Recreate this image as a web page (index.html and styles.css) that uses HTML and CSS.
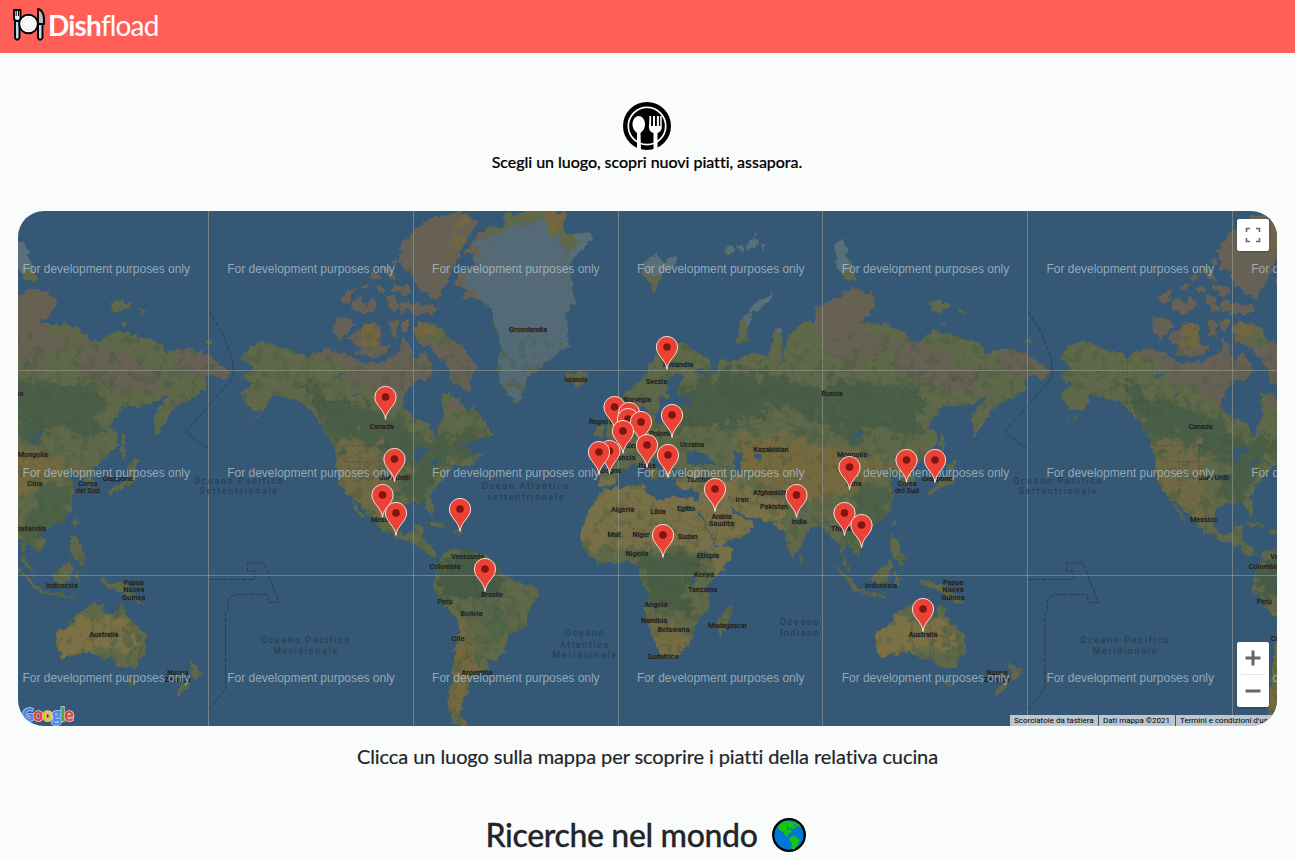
FILE: index.html
```html
<!DOCTYPE html>
<html lang="it">
<head>
<meta charset="utf-8">
<title>Dishfload</title>
<link rel="stylesheet" href="styles.css">
</head>
<body>
<header class="navbar">
  <svg class="brand-icon" viewBox="0 0 32 34" aria-hidden="true">
    <g stroke="#000" stroke-width="1.9" stroke-linejoin="round">
      <path d="M2 12V30Q4 33.500 6.500 30V12z" fill="#b9d9ef"/>
      <path d="M1 2V10Q1 13 4.300 13T7.500 10V2z" fill="#eee"/>
      <path d="M3.200 2v6M5.500 2v6" stroke-width="1"/>
      <path d="M25 14V30Q27 33.500 29.500 30V14z" fill="#b9d9ef"/>
      <path d="M25 1Q30.500 2 31 11V16H25z" fill="#bbb"/>
      <circle cx="15.500" cy="16" r="9.300" fill="#fff"/>
    </g>
    <circle cx="15.500" cy="16" r="6.200" fill="#f8f8f8" stroke="#ddd" stroke-width=".7"/>
  </svg>
  <span class="brand"><b>Dish</b>fload</span>
</header>
<main class="content">
  <section class="intro">
    <svg class="plate" viewBox="0 0 48 48" aria-hidden="true">
      <circle cx="24" cy="24" r="24" fill="#000"/>
      <circle cx="24" cy="24" r="18.700" fill="none" stroke="#fff" stroke-width="1.700"/>
      <path d="M14 48V31Q9 27 9.500 21Q11 14 15.700 14Q20.500 14 22 21Q22.500 27 17.500 31L18 48z" fill="#fff"/>
      <path d="M26.500 14h1.600v10h1.900V14h2v10h1.900V14h2v10h1.300V14h1.500V26Q38 30 34.500 31V47H30.500V31Q26 30 26 25z" fill="#fff"/>
    </svg>
    <p class="tagline">Scegli un luogo, scopri nuovi piatti, assapora.</p>
  </section>
  <section class="map">
    <svg class="map-canvas" viewBox="18 211 1259 515">
      <defs>
        <filter id="coast" x="0" y="0" width="100%" height="100%" color-interpolation-filters="sRGB">
          <feTurbulence type="fractalNoise" baseFrequency=".16" numOctaves="3" seed="4" result="n"/>
          <feDisplacementMap in="SourceGraphic" in2="n" scale="8" xChannelSelector="R" yChannelSelector="G"/>
        </filter>
        <filter id="patch" x="-20%" y="-20%" width="140%" height="140%" color-interpolation-filters="sRGB">
          <feTurbulence type="fractalNoise" baseFrequency=".08" numOctaves="4" seed="9" result="n"/>
          <feGaussianBlur in="SourceGraphic" stdDeviation="1.200" result="b"/>
          <feDisplacementMap in="b" in2="n" scale="34" xChannelSelector="R" yChannelSelector="G"/>
        </filter>
        <filter id="speckle" x="0" y="0" width="100%" height="100%" color-interpolation-filters="sRGB">
          <feTurbulence type="fractalNoise" baseFrequency=".11" numOctaves="4" seed="21"/>
          <feColorMatrix values="0 0 0 0 .25  0 0 0 0 .35  0 0 0 0 .25  9 0 0 0 -5"/>
        </filter>
        <clipPath id="land"><path id="shore" d="M240 358L248 347 263 341 281 347 308 357 326 348 345 353 361 363 385 362 395 355 401 352 403 338 410 345 413 358 424 362 431 372 419 378 408 388 404 395 402 408 414 418 429 423 434 437 438 435 438 425 444 415 441 393 453 393 463 405 468 415 472 405 482 418 492 432 488 438 477 440 465 443 456 450 470 447 472 455 484 453 470 465 453 467 447 472 445 477 437 485 430 497 435 508 433 517 428 508 423 502 410 503 397 508 394 525 402 535 412 533 416 525 424 526 422 535 426 543 434 547 437 555 431 557 419 547 411 543 397 537 387 533 379 528 377 522 367 513 357 500 353 500 360 510 367 520 360 516 351 500 339 482 336 467 335 450 329 438 321 425 312 412 301 402 284 397 271 395 268 405 258 418 245 425 263 412 251 410 243 400 241 393 255 383 240 378 248 372 253 368z
          M335 317L348 318 355 325 340 340 333 332zM351 335L365 325 375 322 380 328 381 345 391 348 378 357 355 355 361 348 348 338zM339 300L347 290 354 288 350 300 343 303zM351 300L361 299 367 306 373 296 377 309 363 314 353 308zM362 283h7v5h-7zM390 320L398 322 397 338 391 335zM401 320L410 320 407 332 401 332zM380 265l10 3 8 12-8-2zM386 295l10 2 4 12-8 3zM400 303l9-4 3 10-10 4zM393 284l12 3v5l-12-2zM370 276l7-3 3 5-7 3zM392 262l4-5 3 6-5 3zM398 289l8-4 6 6-8 5zM376 288l6-2 3 5-6 2z
          M399 250L406 240 413 232 430 218 460 212 478 222 467 238 460 255 447 282 437 300 427 294 417 285 410 272 401 268zM410 304L433 305 436 311 430 314 411 314zM412 330L420 322 430 322 443 328 447 338 460 345 477 368 470 375 470 392 453 382 447 365 430 348 417 342zM418 358L424 352 430 362 433 373 425 382 418 376z
          M478 235L490 227 502 228 505 213 520 213 537 210 567 213 563 228 570 235 590 232 592 238 577 255 570 265 573 285 575 302 566 312 568 325 568 345 555 355 543 365 527 378 520 402 510 398 498 378 497 358 502 350 497 332 490 308 477 298 460 298 466 290 455 283 460 272 472 270 475 257 465 252zM567 372L575 374 587 372 588 380 577 387 567 380z
          M438 568L443 552 457 548 487 555 505 575 517 582 537 588 538 595 528 612 527 625 510 633 507 645 497 660 487 660 488 668 470 678 468 695 462 702 460 715 470 727 453 724 447 705 452 678 455 652 458 632 457 617 443 605 433 588 434 578zM424 524l12-3 12 7-8-1zM449 530l12 0 4 4-12-1z
          M603 488L623 488 643 485 650 497 663 502 670 495 697 500 700 515 715 545 733 548 730 562 707 585 710 608 697 622 693 638 677 657 662 657 652 635 645 612 648 595 640 578 640 565 627 562 610 563 597 563 583 548 580 538 582 525 592 505zM732 603L732 612 723 635 718 633 718 617z
          M652 358L663 348 683 342 705 357 712 365 710 372 697 368 697 375 717 372 720 358 730 362 753 352 770 355 775 327 782 328 783 365 787 338 803 322 815 322 815 308 840 296 853 287 875 297 875 308 860 322 897 328 917 343 935 330 980 343 985 353 1007 348 1027 355 1050 372 1042 380 1027 373 1025 390 1003 402 990 412 975 438 972 418 987 395 970 405 943 407 928 427 937 432 937 445 920 462 911 471 915 483 906 486 900 475 887 473 892 482 892 508 883 520 870 527 857 529 865 542 858 555 847 542 843 555 850 568 856 578 843 563 840 542 832 538 820 525 810 528 798 552 793 558 783 532 770 522 743 515 728 505 735 515 753 522 750 532 718 547 710 532 697 505 700 490 677 488 677 480 683 471 672 468 673 475 667 479 662 466 650 456 657 470 660 476 652 482 653 473 641 462 632 465 622 470 615 484 600 487 598 470 612 468 607 455 618 448 632 438 636 428 647 425 648 410 654 408 655 423 675 420 672 410 688 402 700 395 680 399 676 388 684 378 678 372 667 380 668 398 661 398 658 412 648 417 643 405 633 412 622 412 623 395 643 378z
          M607 430L610 410 618 418 625 440 608 443zM595 428L604 425 603 436 595 438zM737 343L741 321 755 303 772 293 773 299 752 314 747 334 750 342zM643 262l15-8 4 7 15-5-3 10-11 5-8 22-5-10-8-8zM724 250l8-4 3 5-7 3zM737 247l5-2 3 5-5 2zM746 245l10-6 1 7-8 3zM758 246l9-4-3 7zM751 233l5-1-1 3zM835 243l8-3 6 20 8 20-12 1-8-13zM930 303l10-3 12 4-8 7-12 1zM957 308l10 4-8 1zM940 323l7-1-3 5zM881 325l5-3 2 4-4 2zM1024 341l7-2 2 3-6 2z
          M940 430l4 8v24l-4-8zM953 458l5 5-5 9-7-1zM953 473l2 10-14 5-12 8-3-4 16-11zM894 518l3 3-2 6-4-4zM892 534l6 6 3 12 5 6-4 8-9-9-3-12zM876 571l14-10 3 6-5 16-10 3-6-8zM894 572l9-2-6 3 3 12-5-4zM836 566l20 19 7 10-9-6-17-19zM858 590l22 3 16 6-16-2-22-4zM919 578l12 4 14 3 10 10 10 10-12-4-12-9-12-4-10-6z
          M876 633L889 625 897 612 905 609 914 603 925 606 923 612 934 617 941 602 947 617 965 635 965 652 956 667 938 667 930 657 922 659 910 652 895 655 881 658 876 646zM946 680l6 1-3 7-4-4zM1010 661l7 7 6 5-8 7-4-4zM1012 680l-8 12-9 3 4-9zM800 553l4 6-3 4-3-4z"/></clipPath>
        <g id="world">
          <use href="#shore" fill="#5f6849"/>
          <g clip-path="url(#land)">
            <g filter="url(#patch)">
              <path d="M345 340H482V392L460 410 445 385 400 405 365 385 345 370zM325 275H415V360H325zM390 200H485V320H390z" fill="#676155"/>
              <path d="M296 375L335 400 360 405 400 420 420 438 490 432 480 455 440 465 425 500 400 500 410 465 370 445 350 432 345 450 330 440 320 415z" fill="#4b5e47"/>
              <path d="M338 445L385 445 380 490 395 520 380 525 345 490z" fill="#716845"/>
              <path d="M438 565L465 550 505 575 500 590 475 600 440 598z" fill="#485b47"/>
              <path d="M455 615L470 620 475 665 465 727 450 700z" fill="#74693f"/>
              <path d="M475 605L500 595 505 640 490 650z" fill="#53664a"/>
              <path d="M570 480L700 475 745 545 730 570 705 555 690 548 640 550 570 545z" fill="#7a7048"/>
              <path d="M640 557L700 555 700 570 680 590 700 620 650 605z" fill="#4a5e46"/>
              <path d="M645 610L690 635 675 665 655 650z" fill="#756b45"/>
              <path d="M700 490L735 478 785 505 765 550 715 560z" fill="#7a7048"/>
              <path d="M735 435L795 440 840 450 895 462 855 485 835 500 785 493 740 470z" fill="#76693f"/>
              <path d="M665 400L715 370 800 380 850 400 930 400 920 420 860 430 775 405 735 425 680 428z" fill="#495d47"/>
              <path d="M830 380L920 385 920 440 870 430 850 445 825 425z" fill="#4b5e47"/>
              <path d="M860 485L895 480 890 520 850 555 840 530z" fill="#4d6147"/>
              <path d="M805 280L890 275 865 320 890 345 855 365 825 350zM890 345L920 340 1000 390 950 390 900 375zM985 335L1060 350V390L1005 375z" fill="#676153"/>
              <path d="M870 622L945 618 955 650 910 650 875 660z" fill="#7b7145"/>
              <path d="M460 285L490 235 540 220 580 260 572 345 525 385 515 408 495 365 490 310z" fill="#546a76"/>
              <path d="M575 220H605V262H575zM745 285H780V330H745zM635 245H685V275H640zM720 225H770V255H720zM825 235H850V270H830z" fill="#58707c"/>
              <path d="M462 212H475L445 260zM535 205H575V228H540zM355 315L380 325 385 350 370 352zM410 315L425 325 420 345z" fill="#74673f"/>
            </g>
            <path filter="url(#patch)" stroke="#45563f" stroke-width="2" fill="none" opacity=".6" d="M255 370L310 385 345 430M610 460L690 450M625 425L720 425M720 390L790 395M780 425L830 440M850 350L860 390M890 360L940 390 1010 365M790 500L830 510M500 600L520 620M935 610L960 655M465 660L495 640"/>
            <g filter="url(#speckle)" opacity=".35"><path d="M208 335H1060V520H208zM440 545H540V727H440zM640 560H735V660H640z" fill="#000"/></g>
          </g>
          <path d="M685 456L694 451 707 455 716 464 703 466 688 464zM734 451l9 4-3 9 4 12-9-2-1-11zM755 453l7 0-2 7-7-2zM851 440l10-12 2 3-10 12zM337 374l10-3-9 8zM351 396l12-5-8 6zM412 450l12-4 8 6-9 2-6 9-2-10zM430 463l9-5 2 2-10 6zM691 578l5-1v7l-5-1z" fill="#345875"/>
        </g>
        <g id="lines" fill="none">
          <path d="M335 446H380L410 452M308 350V402H360M360 450V500M380 447V485M405 452V490M345 462H400M345 475H400M600 520L640 545M620 500L650 525 680 520 700 530M650 545L675 560 700 565M640 570L680 595M660 600L690 610M470 570L480 600 510 630M455 590L475 605 470 630M720 430L780 420 830 440M765 465L800 480M912 618V650M930 620V655M850 460L890 450M785 500L820 520" stroke="#343d35" stroke-width=".6" opacity=".5" stroke-dasharray="4 1.500"/>
          <path d="M208.500 311L222 332 232 358 233.500 377 185.500 432 208 449M208.500 579.500H254.500V571H247.500V563H264L279 602.500H268.500V594.500H234L228 600V610L225.500 613V689L208 711" stroke="#263c4d" stroke-width=".9" stroke-dasharray="5 1.700"/>
        </g>
      </defs>
      <rect x="18" y="211" width="1259" height="515" fill="#345875"/>
      <g filter="url(#coast)">
        <use href="#world" x="-819.200"/><use href="#world"/><use href="#world" x="819.200"/>
      </g>
      <use href="#lines" x="-819.200"/><use href="#lines"/><use href="#lines" x="819.200"/>
      <path d="M208.500 211V726M413.500 211V726M618.500 211V726M822.500 211V726M1027.500 211V726M1232.500 211V726M18 370.500H1277M18 575.500H1277" stroke="#94988d" stroke-opacity=".65" fill="none"/>
      <g id="labels"></g>
      <g id="notices"></g>
      <g id="pins"></g>
      <text class="logo" x="22" y="720.500" textLength="52"><tspan fill="#4285f4">G</tspan><tspan fill="#ea4335">o</tspan><tspan fill="#fbbc05">o</tspan><tspan fill="#4285f4">g</tspan><tspan fill="#34a853">l</tspan><tspan fill="#ea4335">e</tspan></text>
    </svg>
    <button class="control fullscreen" aria-label="Schermo intero">
      <svg viewBox="0 0 16 16"><path d="M1.500 5V1.500H5M11 1.500h3.500V5M14.500 11v3.500H11M5 14.500H1.500V11" fill="none" stroke="#666" stroke-width="1.600"/></svg>
    </button>
    <div class="control zoom">
      <svg viewBox="0 0 16 16"><path d="M.5 8H15.500M8 .5V15.500" stroke="#666" stroke-width="3"/></svg>
      <i></i>
      <svg viewBox="0 0 16 16"><path d="M.5 8H15.500" stroke="#666" stroke-width="3"/></svg>
    </div>
    <div class="credits"><span>Scorciatoie da tastiera</span><span>Dati mappa ©2021</span><span>Termini e condizioni d'uso</span></div>
  </section>
  <p class="hint">Clicca un luogo sulla mappa per scoprire i piatti della relativa cucina</p>
  <h2 class="searches"><span>Ricerche nel mondo</span>
    <svg viewBox="0 0 34 34" aria-hidden="true">
      <circle cx="17" cy="17" r="15.800" fill="#0078d7" stroke="#000" stroke-width="2.300"/>
      <path d="M6 8Q11 2.500 17 2.800L21 4 27 6 29 9 25 8 22 11 18 10 20 14 16 16 17 19 13 17 10 13 7 12zM18 19L23 18 28 22 26 26 22 32 19 30 20 25 17 22z" fill="#16c60c"/>
      <path d="M15 8l3 2-3 2zM22 6l3 1-3 1z" fill="#0078d7"/>
    </svg>
  </h2>
</main>
<script src="map.js"></script>
</body>
</html>
```
FILE: styles.css
```css
* { box-sizing: border-box; }
body { margin: 0 1px 0 0; height: 858px; overflow: hidden; background: #fafcfb; color: #212529; font-family: Lato, "Open Sans", sans-serif; }
.navbar { height: 53px; padding: 0 13px 3px; display: flex; align-items: center; gap: 3px; background: #ff5f57; }
.brand-icon { width: 32px; height: 34px; }
.brand { color: #fff; font-size: 28px; line-height: 34px; letter-spacing: -.85px; }
.content { padding: 49px 18px 0; }
.intro { display: flex; flex-direction: column; align-items: center; height: 109px; padding-right: 1px; }
.plate { width: 48px; height: 48px; }
.tagline { margin: 0; color: #000; font-size: 16px; font-weight: 500; line-height: 23px; letter-spacing: -.04px; -webkit-text-stroke: .2px #000; }
.map { position: relative; height: 515px; border-radius: 26px; overflow: hidden; }
.map-canvas { display: block; width: 1259px; height: 515px; }
.country { font: 500 7.2px Roboto, sans-serif; text-anchor: middle; fill: #161b18; stroke: #50524a; stroke-opacity: .45; stroke-width: 1.2px; paint-order: stroke; }
.ocean { font: 8.6px Roboto, sans-serif; text-anchor: middle; fill: #243b4e; letter-spacing: 1.5px; }
.notice { font: 12px "Liberation Sans", sans-serif; fill: #bccad2; fill-opacity: .72; }
.logo { font: 700 17px "Open Sans", sans-serif; stroke: #c8d3dc; stroke-width: 1.5px; paint-order: stroke; }
.control { position: absolute; right: 8px; width: 32px; padding: 0; border: 0; border-radius: 2px; background: #fff; display: flex; flex-direction: column; align-items: center; justify-content: center; box-shadow: 0 1px 2px #0003; }
.control svg { width: 16px; height: 16px; }
.fullscreen { top: 8px; height: 32px; }
.zoom { bottom: 19px; height: 65px; justify-content: space-between; padding: 8px 0; }
.zoom i { width: 24px; height: 1px; background: #e6e6e6; }
.credits { position: absolute; left: 992px; bottom: 0; display: flex; gap: 1px; height: 11px; white-space: nowrap; font: 8px/11px Roboto, sans-serif; color: #000; }
.credits span { padding: 0 4px; background: #f5f5f5b3; }
.credits span:nth-child(1) { width: 88px; }
.credits span:nth-child(2) { width: 76px; }
.credits span:nth-child(3) { width: 102px; }
.hint { margin: 15px 0 0; text-align: center; font-size: 20px; line-height: 30px; letter-spacing: -.08px; -webkit-text-stroke: .2px #212529; }
.searches { margin: 44px 0 0; padding-right: 4px; display: flex; justify-content: center; align-items: center; gap: 14px; font-size: 32px; font-weight: 500; line-height: 40px; letter-spacing: -.35px; -webkit-text-stroke: .3px #212529; }
.searches svg { width: 34px; height: 34px; }
```
FILE: map.js
```js
const NS = 'http://www.w3.org/2000/svg';
const WORLD = 819.2;

function add(parent, tag, attrs, text) {
  const el = document.createElementNS(NS, tag);
  for (const key in attrs) el.setAttribute(key, attrs[key]);
  if (text) el.textContent = text;
  document.getElementById(parent).append(el);
}

// Label, centre x, baseline y, rendered width
const countries = [
  ['Canada', 381.5, 429, 24], ['Stati Uniti', 394.5, 480, 31], ['Messico', 384.5, 522, 27],
  ['Groenlandia', 528, 332, 38], ['Islanda', 576, 382, 23], ['Finlandia', 678, 367, 30],
  ['Svezia', 656.5, 384, 21], ['Norvegia', 637, 402, 28], ['Regno Unito', 607, 424, 36],
  ['Polonia', 661, 436, 23], ['Germania', 641, 448, 30], ['Ucraina', 692, 447, 24],
  ['Francia', 623, 460, 25], ['Spagna', 609, 473, 24], ['Italia', 647, 468, 17],
  ['Kazakistan', 771, 452, 35], ['Russia', 832, 396, 21], ['Mongolia', 852, 457, 30],
  ['Turchia', 699, 482, 25], ['Iran', 742, 502, 13], ['Afghanistan', 772, 495, 38],
  ['Pakistan', 774, 509, 28], ['India', 799, 524, 15], ['Cina', 854, 486, 15],
  ['Corea', 907, 486, 19], ['del Sud', 907, 492.5, 24], ['Giappone', 937, 481, 30],
  ['Thailandia', 848, 531, 34], ['Algeria', 622.5, 512, 23], ['Libia', 658, 514, 15],
  ['Egitto', 686, 511, 18], ['Arabia', 721.5, 519, 20], ['Saudita', 721.5, 526, 25],
  ['Mali', 614, 537, 13], ['Niger', 641, 537, 17], ['Sudan', 687.5, 539, 20],
  ['Nigeria', 637, 556, 23], ['Etiopia', 708, 558, 22], ['Kenya', 704, 577, 20],
  ['Tanzania', 702.5, 592, 29], ['Angola', 656, 607, 23], ['Namibia', 654, 623, 26],
  ['Botswana', 673.5, 632, 32], ['Sudafrica', 663, 659, 31], ['Madagascar', 727.5, 628, 39],
  ['Venezuela', 467.5, 559, 33], ['Colombia', 445, 569, 31], ['Brasile', 492, 597, 22],
  ['Perù', 445, 604, 15], ['Bolivia', 471.5, 616, 22], ['Cile', 458, 641, 13],
  ['Argentina', 477, 675, 31], ['Indonesia', 881, 587.5, 32], ['Papua', 953, 585, 20],
  ['Nuova', 953, 592, 21], ['Guinea', 953, 599.5, 23], ['Australia', 923, 637, 29],
  ['Nuova', 997, 675, 21], ['Zelanda', 997, 682, 26]
];
const oceans = [
  ['Oceano Pacifico', 239, 484, 90], ['Settentrionale', 239, 494, 79],
  ['Oceano Pacifico', 306, 643, 90], ['Meridionale', 306, 654, 65],
  ['Ocean Atlantico', 526, 489, 88], ['settentrionale', 526, 499.5, 78],
  ['Oceano', 585, 636, 40], ['Atlantico', 585, 647.5, 50], ['Meridionale', 585, 658, 65],
  ['Oceano', 800, 625, 40], ['Indiano', 800, 635.5, 40]
];

for (const [kind, list] of [['ocean', oceans], ['country', countries]]) {
  for (const [name, x, y, width] of list) {
    for (const shift of [-WORLD, 0, WORLD]) {
      const cx = x + shift;
      if (cx + width / 2 > 18 && cx - width / 2 < 1277) {
        add('labels', 'text', { class: kind, x: cx, y, textLength: width }, name);
      }
    }
  }
}

for (const y of [272.5, 477, 682]) {
  for (let i = 0; i < 7; i++) {
    add('notices', 'text', { class: 'notice', x: 22.5 + i * 204.8, y, textLength: 167.5 }, 'For development purposes only');
  }
}

// Centre of each marker's dot
const places = [
  [667, 347], [385.5, 397], [614.5, 407], [629, 413], [672, 415], [628, 419], [641, 422],
  [623, 431], [647, 445], [609.5, 451], [599, 452], [668, 455], [394.5, 459],
  [906.5, 460], [935, 460], [849.5, 467], [715, 489], [382.5, 495], [796.5, 495],
  [460, 509], [396, 513], [844.5, 513], [861.5, 525], [663, 535], [485, 569], [923, 609]
];
for (const [x, y] of places) {
  add('pins', 'path', {
    d: `M${x} ${y + 22.5}C${x - .9} ${y + 12} ${x - 10.6} ${y + 9} ${x - 10.6} ${y}A10.6 10.6 0 0 1 ${x + 10.6} ${y}C${x + 10.6} ${y + 9} ${x + .9} ${y + 12} ${x} ${y + 22.5}Z`,
    fill: '#ea4335', stroke: '#f6dcd8', 'stroke-width': 1
  });
  add('pins', 'circle', { cx: x, cy: y, r: 3.8, fill: '#811411' });
}
```
